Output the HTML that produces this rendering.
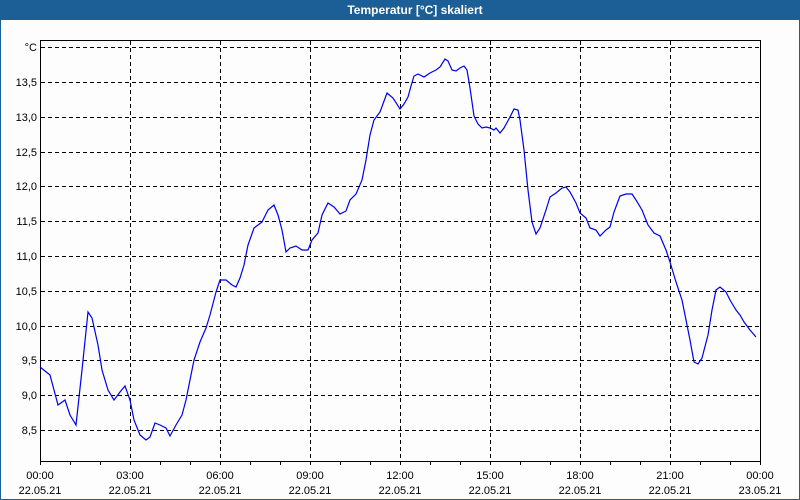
<!DOCTYPE html>
<html><head><meta charset="utf-8"><style>
html,body{margin:0;padding:0;width:800px;height:500px;overflow:hidden;background:#fcfdfc;}
.t{position:absolute;left:0;top:0;width:800px;height:20px;background:#1c5e96;color:#fff;font:bold 12px "Liberation Sans",sans-serif;line-height:21px;text-align:center;}
.t span{position:relative;left:15px;}
.fr{position:absolute;left:0;top:0;width:798px;height:498px;border:1px solid #1c5e96;}
svg{position:absolute;left:0;top:0;}
text{font-family:"Liberation Sans",sans-serif;font-size:11px;fill:#000;}
</style></head><body>
<div class="fr"></div>
<div class="t"><span>Temperatur [°C] skaliert</span></div>
<svg width="800" height="500">
<g stroke="#000" stroke-width="1" stroke-dasharray="4,3" shape-rendering="crispEdges">
<line x1="41" y1="47.5" x2="760" y2="47.5"/>
<line x1="41" y1="82.5" x2="760" y2="82.5"/>
<line x1="41" y1="117.5" x2="760" y2="117.5"/>
<line x1="41" y1="152.5" x2="760" y2="152.5"/>
<line x1="41" y1="186.5" x2="760" y2="186.5"/>
<line x1="41" y1="221.5" x2="760" y2="221.5"/>
<line x1="41" y1="256.5" x2="760" y2="256.5"/>
<line x1="41" y1="291.5" x2="760" y2="291.5"/>
<line x1="41" y1="326.5" x2="760" y2="326.5"/>
<line x1="41" y1="360.5" x2="760" y2="360.5"/>
<line x1="41" y1="395.5" x2="760" y2="395.5"/>
<line x1="41" y1="430.5" x2="760" y2="430.5"/>
<line x1="130.5" y1="41" x2="130.5" y2="461"/>
<line x1="220.5" y1="41" x2="220.5" y2="461"/>
<line x1="310.5" y1="41" x2="310.5" y2="461"/>
<line x1="400.5" y1="41" x2="400.5" y2="461"/>
<line x1="490.5" y1="41" x2="490.5" y2="461"/>
<line x1="580.5" y1="41" x2="580.5" y2="461"/>
<line x1="670.5" y1="41" x2="670.5" y2="461"/>
</g>
<g stroke="#000" stroke-width="1" fill="none" shape-rendering="crispEdges">
<polyline points="40.5,461 40.5,40.5 760.5,40.5 760.5,461.5 40.5,461.5"/>
<path d="M40.5 461v4M70.5 461v4M100.5 461v4M130.5 461v4M160.5 461v4M190.5 461v4M220.5 461v4M250.5 461v4M280.5 461v4M310.5 461v4M340.5 461v4M370.5 461v4M400.5 461v4M430.5 461v4M460.5 461v4M490.5 461v4M520.5 461v4M550.5 461v4M580.5 461v4M610.5 461v4M640.5 461v4M670.5 461v4M700.5 461v4M730.5 461v4M760.5 461v4"/>
</g>
<polyline fill="none" stroke="#0000ee" stroke-width="1.2" points="40,367 50,375 58,405 65,400 70,415 76,425 82,370 88,312 92,318 98,345 102,370 108,390 114,400 120,392 125,386 130,400 134,420 140,435 146,440 150,437 155,423 160,425 166,428 170,436 176,425 182,415 186,400 190,380 194,360 200,342 206,328 210,315 216,292 220,280 226,280 232,285 236,287 240,278 244,265 248,245 254,228 262,222 268,210 274,205 278,215 282,230 286,252 290,248 296,246 302,250 308,250 312,240 318,233 322,215 328,203 334,207 340,214 346,211 350,200 356,194 362,180 366,160 370,135 374,120 380,112 387,93 393,98 400,109 404,104 408,97 411,86 414,76 418,74 424,77 430,73 436,70 440,67 445,59 448,61 452,70 456,71 460,68 464,66 467,70 470,88 474,116 478,124 482,128 486,127 490,128 494,130 496,128 500,133 504,128 510,117 514,109 518,110 520,120 524,150 528,190 532,222 536,234 540,228 546,210 550,197 556,193 562,188 566,187 570,192 576,203 580,213 586,218 590,228 596,230 600,236 606,230 610,227 614,212 620,196 626,194 632,194 636,200 642,210 648,225 654,233 660,236 666,250 670,262 676,282 682,300 686,320 690,340 694,362 698,364 702,358 708,335 712,310 716,290 720,287 726,292 730,300 736,310 740,315 744,322 750,330 756,337"/>
<g text-anchor="end">
<text x="37" y="51">°C</text>
<text x="37" y="86">13,5</text>
<text x="37" y="121">13,0</text>
<text x="37" y="156">12,5</text>
<text x="37" y="190">12,0</text>
<text x="37" y="225">11,5</text>
<text x="37" y="260">11,0</text>
<text x="37" y="295">10,5</text>
<text x="37" y="330">10,0</text>
<text x="37" y="364">9,5</text>
<text x="37" y="399">9,0</text>
<text x="37" y="434">8,5</text>
</g>
<g text-anchor="middle">
<text x="40" y="479">00:00</text><text x="40" y="494">22.05.21</text>
<text x="130" y="479">03:00</text><text x="130" y="494">22.05.21</text>
<text x="220" y="479">06:00</text><text x="220" y="494">22.05.21</text>
<text x="310" y="479">09:00</text><text x="310" y="494">22.05.21</text>
<text x="400" y="479">12:00</text><text x="400" y="494">22.05.21</text>
<text x="490" y="479">15:00</text><text x="490" y="494">22.05.21</text>
<text x="580" y="479">18:00</text><text x="580" y="494">22.05.21</text>
<text x="670" y="479">21:00</text><text x="670" y="494">22.05.21</text>
<text x="760" y="479">00:00</text><text x="760" y="494">23.05.21</text>
</g>
</svg>
</body></html>
